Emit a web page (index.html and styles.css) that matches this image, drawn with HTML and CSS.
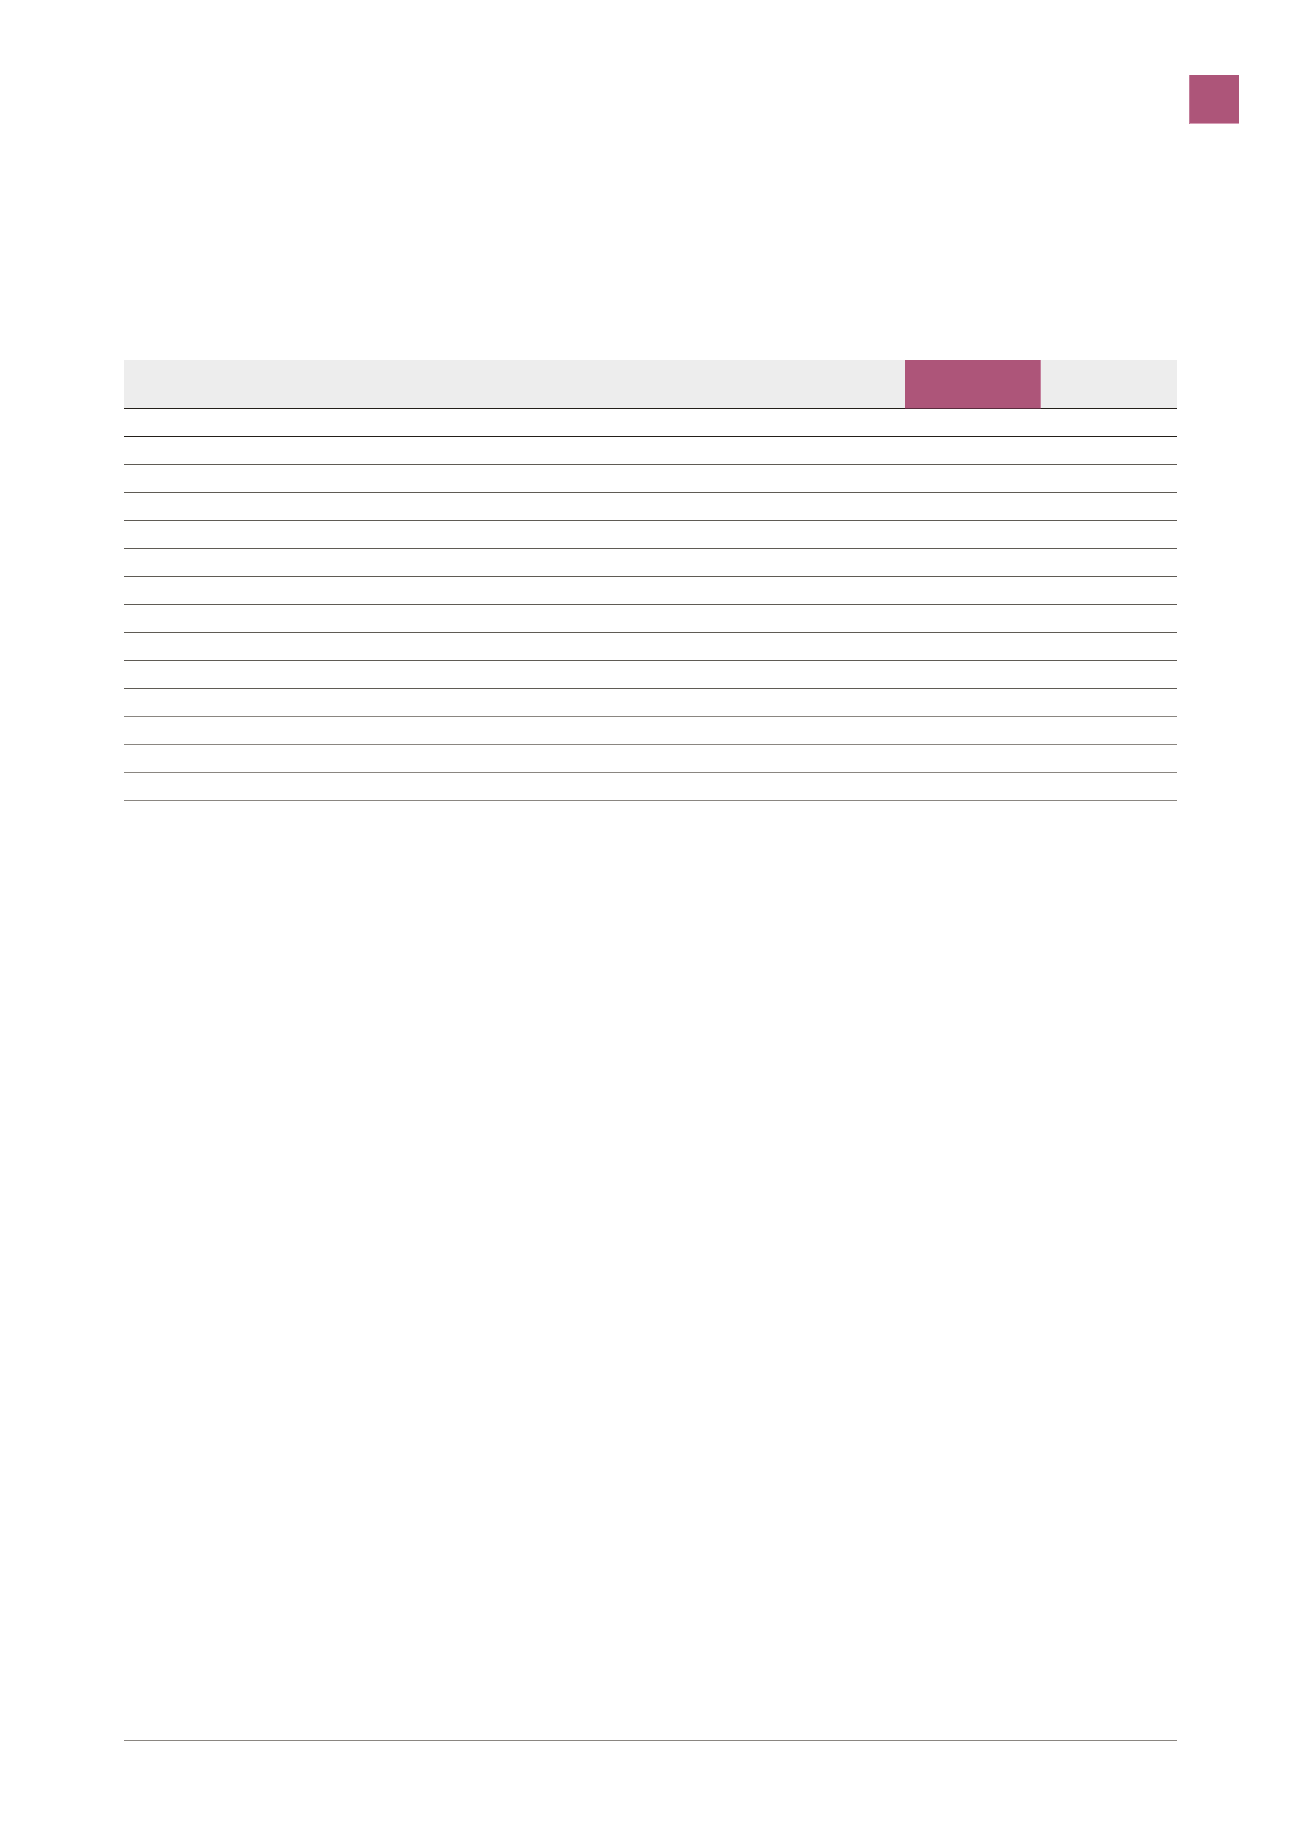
FILE: index.html
```html
<!DOCTYPE html>
<html lang="en">
<head>
<meta charset="utf-8">
<title>Table page</title>
<link rel="stylesheet" href="styles.css">
</head>
<body>
<div class="page">
  <div class="top">
    <div class="tab-marker"></div>
  </div>
  <div class="table">
    <div class="row head">
      <div class="cell label"></div>
      <div class="cell current"></div>
      <div class="cell prior"></div>
    </div>
    <div class="row dark"><div class="cell label"></div><div class="cell current"></div><div class="cell prior"></div></div>
    <div class="row"><div class="cell label"></div><div class="cell current"></div><div class="cell prior"></div></div>
    <div class="row"><div class="cell label"></div><div class="cell current"></div><div class="cell prior"></div></div>
    <div class="row"><div class="cell label"></div><div class="cell current"></div><div class="cell prior"></div></div>
    <div class="row"><div class="cell label"></div><div class="cell current"></div><div class="cell prior"></div></div>
    <div class="row"><div class="cell label"></div><div class="cell current"></div><div class="cell prior"></div></div>
    <div class="row"><div class="cell label"></div><div class="cell current"></div><div class="cell prior"></div></div>
    <div class="row"><div class="cell label"></div><div class="cell current"></div><div class="cell prior"></div></div>
    <div class="row"><div class="cell label"></div><div class="cell current"></div><div class="cell prior"></div></div>
    <div class="row"><div class="cell label"></div><div class="cell current"></div><div class="cell prior"></div></div>
    <div class="row light"><div class="cell label"></div><div class="cell current"></div><div class="cell prior"></div></div>
    <div class="row light"><div class="cell label"></div><div class="cell current"></div><div class="cell prior"></div></div>
    <div class="row light"><div class="cell label"></div><div class="cell current"></div><div class="cell prior"></div></div>
    <div class="row light"><div class="cell label"></div><div class="cell current"></div><div class="cell prior"></div></div>
  </div>
  <div class="spacer"></div>
  <div class="footer"></div>
</div>
</body>
</html>
```
FILE: styles.css
```css
html, body {
  margin: 0;
  padding: 0;
  background: #ffffff;
  font-family: "Liberation Sans", Arial, sans-serif;
}

.page {
  width: 1300px;
  height: 1839px;
  display: flex;
  flex-direction: column;
  box-sizing: border-box;
  padding-top: 75px;
}

.top {
  display: flex;
  justify-content: flex-end;
  padding-right: 61px;
}

.tab-marker {
  width: 50px;
  height: 49px;
  background: #ad5579;
  box-shadow: inset 1px 0 0 #c27c99, inset 0 -1px 0 #d59db5;
}

.table {
  margin: 236px 0 0 124px;
  width: 1053px;
  display: flex;
  flex-direction: column;
}

.row {
  display: grid;
  grid-template-columns: 781px 136px 136px;
  height: 28px;
  box-sizing: border-box;
  border-bottom: 1px solid #5f5b55;
}

.row.head {
  height: 49px;
  background: #ededed;
  border-bottom: 1px solid #231f1a;
}

.row.dark {
  border-bottom-color: #231f1a;
}

.row.light {
  border-bottom-color: #8a8681;
}

.row.head .current {
  background: #ad5579;
  box-shadow: inset -1px 0 0 #c47f9c, 0 1px 0 #5a2c3f;
}

.spacer {
  flex: 1;
}

.footer {
  margin: 0 0 97px 124px;
  width: 1053px;
  height: 1px;
  border-top: 1px solid #8a8681;
}
```
